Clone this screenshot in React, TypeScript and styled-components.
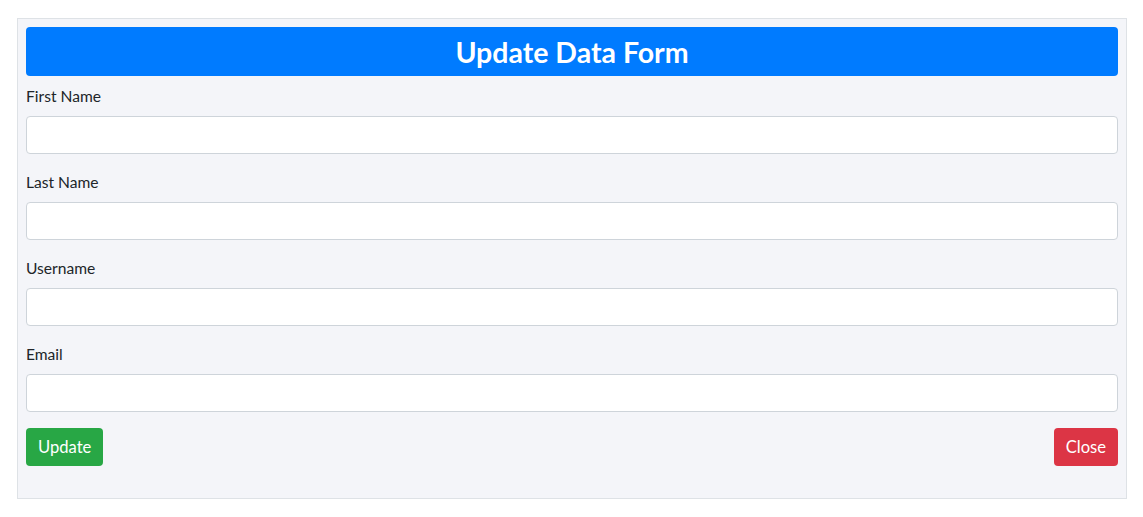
import * as React from 'react';
import styled, { createGlobalStyle } from 'styled-components';

const GlobalStyle = createGlobalStyle`
  * { box-sizing: border-box; }
  body {
    margin: 0;
    background: #fff;
    font-family: "Segoe UI", Lato, "Noto Sans", sans-serif;
    color: #212529;
  }
`;

const Page = styled.div`
  padding: 18px 16px 0 17px;
`;

const Card = styled.div`
  border: 1px solid #dee2e6;
  background: #f4f5f9;
  padding: 8px 8px 32px;
`;

const Header = styled.h2`
  margin: 0 0 8px;
  height: 49px;
  background: #007bff;
  color: #fff;
  border-radius: 4px;
  display: flex;
  align-items: center;
  justify-content: center;
  font-size: 28.5px;
  font-weight: 700;
`;

const Group = styled.div`
  margin-bottom: 16px;
`;

const Label = styled.label`
  display: block;
  font-size: 15.6px;
  line-height: 24px;
  margin-bottom: 8px;
`;

const Input = styled.input`
  display: block;
  width: 100%;
  height: 38px;
  border: 1px solid #ced4da;
  border-radius: 4px;
  background: #fff;
  padding: 6px 12px;
  font-size: 16px;
  font-family: inherit;
`;

const Actions = styled.div`
  display: flex;
  justify-content: space-between;
`;

const Button = styled.button<{ $tone: 'success' | 'danger' }>`
  height: 38px;
  padding: 0 12px;
  border: none;
  border-radius: 4px;
  color: #fff;
  font-size: 16.6px;
  font-family: inherit;
  background: ${(p) => (p.$tone === 'success' ? '#28a745' : '#dc3545')};
`;

const fields = ['First Name', 'Last Name', 'Username', 'Email'];

export default function App() {
  return (
    <>
      <GlobalStyle />
      <Page>
        <Card>
          <Header>Update Data Form</Header>
          {fields.map((f) => (
            <Group key={f}>
              <Label>{f}</Label>
              <Input type="text" />
            </Group>
          ))}
          <Actions>
            <Button $tone="success">Update</Button>
            <Button $tone="danger">Close</Button>
          </Actions>
        </Card>
      </Page>
    </>
  );
}
